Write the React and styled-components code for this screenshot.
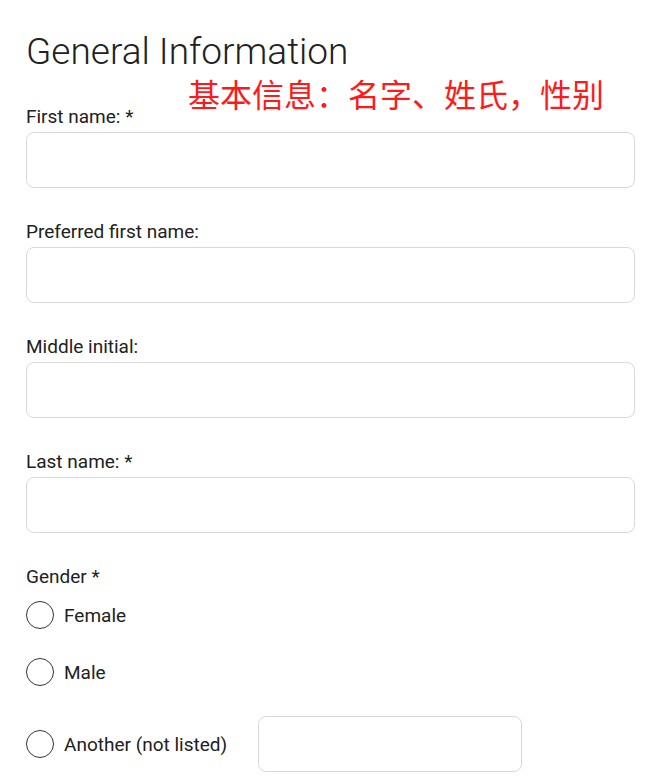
import React from "react";
import styled, { createGlobalStyle } from "styled-components";

const Global = createGlobalStyle`
  html, body { margin: 0; padding: 0; background: #fff; overflow: hidden; }
  * { box-sizing: border-box; }
`;

const Page = styled.div`
  position: relative;
  padding: 30px 29px 0 26px;
  font-family: Roboto, "Liberation Sans", sans-serif;
  color: #212121;
`;

const Heading = styled.h1`
  margin: 0 0 32px;
  font-family: Roboto, sans-serif;
  font-weight: 300;
  font-size: 37px;
  line-height: 44px;
  color: #212121;
`;

const Annotation = styled.div`
  position: absolute;
  left: 188px;
  top: 77px;
  font-family: "Noto Sans CJK SC", sans-serif;
  font-size: 32px;
  line-height: 1;
  color: #ff1a1a;
  white-space: nowrap;
`;

const Field = styled.div`
  display: flex;
  flex-direction: column;
  gap: 4px;
  margin-bottom: 33px;
`;

const Label = styled.label`
  display: block;
  font-size: 19px;
  line-height: 22px;
  color: #212121;
`;

const Input = styled.input`
  display: block;
  width: ${(p) => p.$width || "100%"};
  height: 56px;
  border: 1px solid #d9d9d9;
  border-radius: 8px;
  background: #fff;
  padding: 0 14px;
  font: inherit;
  outline: none;
`;

const RadioGroup = styled.div`
  display: flex;
  flex-direction: column;
  gap: 29px;
  margin-top: 13px;
`;

const RadioRow = styled.label`
  display: flex;
  align-items: center;
  gap: 10px;
  min-height: ${(p) => (p.$tall ? "56px" : "28px")};
  margin-top: ${(p) => (p.$tall ? "1px" : "0")};
  font-size: 19px;
  color: #212121;
`;

const Circle = styled.span`
  width: 28px;
  height: 28px;
  border-radius: 50%;
  border: 1px solid #333;
  flex-shrink: 0;
`;

const OtherInput = styled(Input)`
  margin-left: 21px;
`;

const fields = [
  "First name: *",
  "Preferred first name:",
  "Middle initial:",
  "Last name: *",
];

export default function App() {
  return (
    <>
      <Global />
      <Page>
        <Heading>General Information</Heading>
        <Annotation>基本信息：名字、姓氏，性别</Annotation>
        {fields.map((f) => (
          <Field key={f}>
            <Label>{f}</Label>
            <Input />
          </Field>
        ))}
        <Label>Gender *</Label>
        <RadioGroup>
          <RadioRow>
            <Circle />
            Female
          </RadioRow>
          <RadioRow>
            <Circle />
            Male
          </RadioRow>
          <RadioRow $tall>
            <Circle />
            Another (not listed)
            <OtherInput $width="264px" />
          </RadioRow>
        </RadioGroup>
      </Page>
    </>
  );
}
